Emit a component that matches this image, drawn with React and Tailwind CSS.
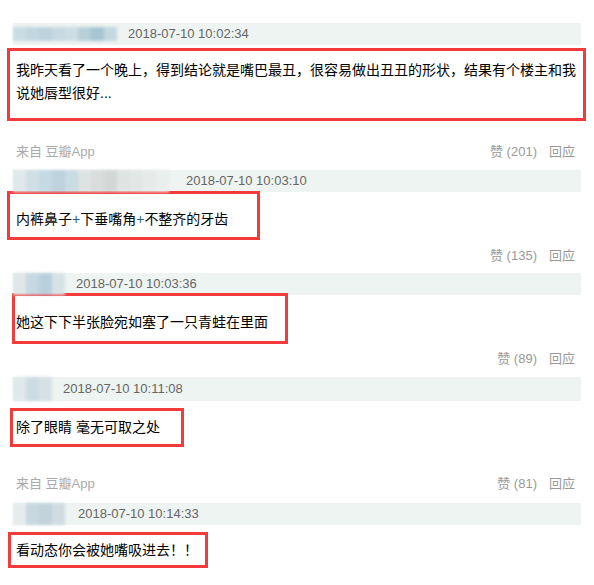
const font = { fontFamily: '"Liberation Sans", "Noto Sans CJK SC", sans-serif' };

// blurred avatar/name placeholder: colored tiles softened with a blur
function BlurName({ tiles, h = 14 }) {
  return (
    <div className="flex blur-[1.5px] shrink-0">
      {tiles.map((c, i) => (
        <div key={i} className="w-[13px]" style={{ background: c, height: h }} />
      ))}
    </div>
  );
}

function Header({ tiles, time, gap, h = 14, barH = "h-[22px]" }) {
  return (
    <div className={`${barH} mx-[13px] bg-[#eef4f1] flex items-center`}>
      <BlurName tiles={tiles} h={h} />
      <span className="text-[13px] text-[#666]" style={{ marginLeft: gap }}>
        {time}
      </span>
    </div>
  );
}

function Meta({ likes, source, className }) {
  return (
    <div className={`h-[20px] flex items-center pl-[16px] pr-[19px] text-[13px] ${className}`}>
      {source && <span className="text-[#aaa]">来自 豆瓣App</span>}
      <div className="ml-auto flex items-center text-[#999]">
        <span>赞 ({likes})</span>
        <span className="ml-[12px]">回应</span>
      </div>
    </div>
  );
}

export default function App() {
  return (
    <div className="w-[594px] h-[585px] bg-white pt-[23px] text-[14px] text-black overflow-hidden" style={font}>
      <Header
        tiles={["#c9dce4", "#c3d7e0", "#bcd2dc", "#c7d9e1", "#cddde4", "#b8cfda", "#a9c5d3", "#c4d8e0"]}
        time="2018-07-10 10:02:34"
        gap={11}
      />
      <div className="mt-[3px] ml-[7px] w-[579px] h-[73px] border-[3px] border-[#f43b3b] pl-[6px] pt-[8px] leading-[23px]">
        我昨天看了一个晚上，得到结论就是嘴巴最丑，很容易做出丑丑的形状，结果有个楼主和我说她唇型很好...
      </div>
      <Meta likes={201} source className="mt-[21px]" />

      <Header
        tiles={["#dfe8ea", "#cfdfe6", "#c5d9e2", "#bdd3de", "#c9dbe3", "#dde3e3", "#d8dddb", "#d3d8d6", "#dfe3e1", "#e2e6e4", "#e6eae8", "#eaeeec"]}
        time="2018-07-10 10:03:10"
        gap={17}
        h={22}
        barH="h-[22px] mt-[8px]"
      />
      <div className="mt-[-1px] ml-[7px] w-[253px] h-[49px] border-[3px] border-[#f43b3b] pl-[6px] pt-[15px] leading-[20px]">
        内裤鼻子<span className="text-[#1f5f8f]">+</span>下垂嘴角<span className="text-[#1f5f8f]">+</span>不整齐的牙齿
      </div>
      <Meta likes={135} className="mt-[6px]" />

      <Header
        tiles={["#dfe7ea", "#c6d8e1", "#b9d0dc", "#d7e2e6"]}
        time="2018-07-10 10:03:36"
        gap={11}
        h={22}
        barH="h-[22px] mt-[7px]"
      />
      <div className="mt-[-2px] ml-[12px] w-[276px] h-[51px] border-[3px] border-[#f43b3b] pl-[1px] pt-[16px] leading-[20px]">
        她这下下半张脸宛如塞了一只青蛙在里面
      </div>
      <Meta likes={89} className="mt-[5px]" />

      <Header
        tiles={["#dfe8eb", "#ccdce3", "#d5e1e5"]}
        time="2018-07-10 10:11:08"
        gap={11}
        h={24}
        barH="h-[24px] mt-[8px]"
      />
      <div className="mt-[7px] ml-[10px] w-[174px] h-[39px] border-[3px] border-[#f43b3b] pl-[3px] pt-[6px] leading-[20px]">
        除了眼睛 毫无可取之处
      </div>
      <Meta likes={81} source className="mt-[27px]" />

      <Header
        tiles={["#e6ecee", "#c9d8df", "#c3d3db", "#d0dce1"]}
        time="2018-07-10 10:14:33"
        gap={13}
        h={22}
        barH="h-[22px] mt-[9px]"
      />
      <div className="mt-[7px] ml-[8px] w-[200px] h-[36px] border-[3px] border-[#f43b3b] pl-[5px] pt-[5px] leading-[20px]">
        看动态你会被她嘴吸进去！！
      </div>
    </div>
  );
}
